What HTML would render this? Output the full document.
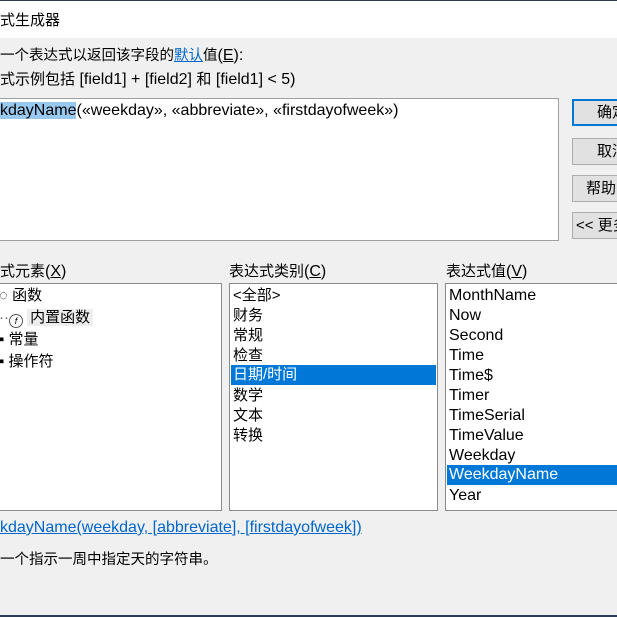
<!DOCTYPE html>
<html><head><meta charset="utf-8"><style>
*{margin:0;padding:0;box-sizing:border-box}
body{width:617px;height:617px;overflow:hidden;background:#f0f0f0;position:relative;font-family:"Liberation Sans","Noto Sans CJK SC",sans-serif;font-size:15px;color:#000}
.a{position:absolute;white-space:nowrap}
.L{font-size:16px}
.box{position:absolute;background:#fff;border:1px solid #8a8a8a}
.row{position:absolute;left:3px;height:20px;line-height:20px;white-space:nowrap}
.lat .row{font-size:16px}
.sel{background:#0078d7;color:#fff}
.btn{position:absolute;left:572px;width:60px;height:27px;background:#e1e1e1;border:1px solid #adadad;line-height:25px;padding-left:24px;font-size:15px}
</style></head><body>
<div class="a" style="left:0;top:0;width:617px;height:1px;background:#2b3a55"></div>
<div class="a" style="left:0;top:1px;width:617px;height:37px;background:#fff"></div>
<div class="a" style="left:0;top:9px;font-size:15px">式生成器</div>
<div class="a" style="left:0;top:44px;font-size:14.5px">一个表达式以返回该字段的<span style="color:#0066cc;text-decoration:underline">默认</span>值<span class="L">(<u>E</u>):</span></div>
<div class="a" style="left:0;top:68px">式示例包括<span class="L"> [field1] + [field2] </span>和<span class="L"> [field1] &lt; 5)</span></div>
<div class="box" style="left:-2px;top:98px;width:561px;height:143px;border-color:#a0a0a0"></div>
<div class="a" style="left:0;top:102px;font-size:16px"><span style="background:#99c9ef">kdayName</span>(«weekday», «abbreviate», «firstdayofweek»)</div>
<div class="btn" style="top:99px;border:2px solid #0078d7;line-height:23px;padding-left:23px">确定</div>
<div class="btn" style="top:138px">取消</div>
<div class="btn" style="top:175px;padding-left:13px">帮助</div>
<div class="btn" style="top:212px;padding-left:3px">&lt;&lt; 更多</div>
<div class="a" style="left:0;top:260px">式元素<span class="L">(<u>X</u>)</span></div>
<div class="a" style="left:229px;top:260px">表达式类别<span class="L">(<u>C</u>)</span></div>
<div class="a" style="left:446px;top:260px">表达式值<span class="L">(<u>V</u>)</span></div>
<div class="box" style="left:-2px;top:283px;width:224px;height:228px">
<div class="row" style="top:2px;left:0">◌ 函数</div>
<div class="row" style="top:24px;left:0;color:#666">··<span style="display:inline-block;width:14px;height:14px;border:1px solid #555;border-radius:50%;font-size:9px;line-height:12px;text-align:center;color:#000;font-style:italic;vertical-align:-2px">f</span> <span style="background:#eee;color:#000;padding:0 3px">内置函数</span></div>
<div class="row" style="top:46px;left:0">▪ 常量</div>
<div class="row" style="top:68px;left:0">▪ 操作符</div>
</div>
<div class="box" style="left:229px;top:283px;width:209px;height:228px">
<div class="row" style="top:2px">&lt;全部&gt;</div>
<div class="row" style="top:22px">财务</div>
<div class="row" style="top:42px">常规</div>
<div class="row" style="top:62px">检查</div>
<div class="row sel" style="top:81px;left:1px;width:205px;padding-left:2px">日期/时间</div>
<div class="row" style="top:102px">数学</div>
<div class="row" style="top:122px">文本</div>
<div class="row" style="top:142px">转换</div>
</div>
<div class="box lat" style="left:445px;top:283px;width:180px;height:228px">
<div class="row" style="top:2px">MonthName</div>
<div class="row" style="top:22px">Now</div>
<div class="row" style="top:42px">Second</div>
<div class="row" style="top:62px">Time</div>
<div class="row" style="top:82px">Time$</div>
<div class="row" style="top:102px">Timer</div>
<div class="row" style="top:122px">TimeSerial</div>
<div class="row" style="top:142px">TimeValue</div>
<div class="row" style="top:162px">Weekday</div>
<div class="row sel" style="top:181px;left:1px;width:178px;padding-left:2px">WeekdayName</div>
<div class="row" style="top:202px">Year</div>
</div>
<div class="a" style="left:0;top:519px;font-size:16px;color:#0066cc;text-decoration:underline">kdayName(weekday, [abbreviate], [firstdayofweek])</div>
<div class="a" style="left:0;top:548px;font-size:14.5px">一个指示一周中指定天的字符串。</div>
<div class="a" style="left:0;top:615px;width:617px;height:2px;background:#2b3a55"></div>
</body></html>
